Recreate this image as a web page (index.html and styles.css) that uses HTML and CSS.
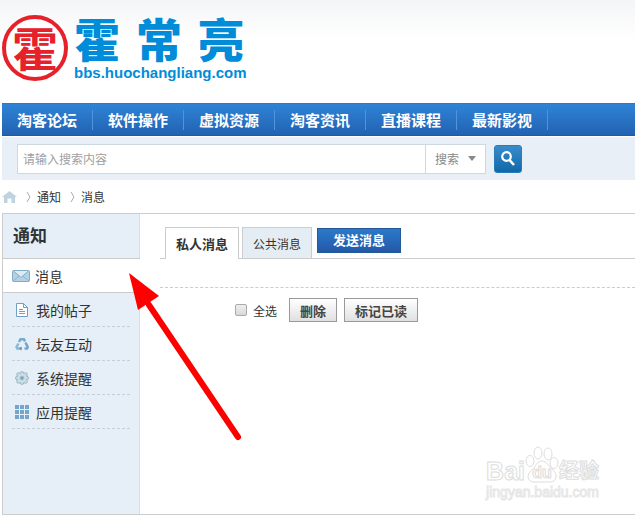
FILE: index.html
```
<!DOCTYPE html>
<html lang="zh-CN">
<head>
  <meta charset="UTF-8" />
  <meta name="viewport" content="width=device-width, initial-scale=1.0"/>
  <title>消息</title>
  <link rel="stylesheet" href="styles.css">
</head>
<body>

<div class="page">
  <!-- Logo -->
  <header class="header">
    <a href="#" class="brand">
      <span class="seal">霍</span>
      <span class="brand-text">
        <span class="brand-name"><span>霍</span><span>常</span><span>亮</span></span>
        <span class="brand-url">bbs.huochangliang.com</span>
      </span>
    </a>
  </header>

  <!-- Navigation links -->
  <nav class="navbar">
    <a href="#">淘客论坛</a>
    <a href="#">软件操作</a>
    <a href="#">虚拟资源</a>
    <a href="#">淘客资讯</a>
    <a href="#">直播课程</a>
    <a href="#">最新影视</a>
  </nav>

  <form class="search">
    <input type="text" class="search-input" placeholder="请输入搜索内容" aria-label="请输入搜索内容">
    <div class="search-type">
      <select aria-label="搜索">
        <option>搜索</option>
      </select>
      <svg width="8" height="5" viewBox="0 0 8 5"><path d="M0 0H8L4 5Z" fill="#888"/></svg>
    </div>
    <button type="button" class="search-btn" aria-label="搜索">
      <svg width="14" height="15" viewBox="0 0 14 15" fill="none" stroke="#fff">
        <circle cx="5.5" cy="5.5" r="4.3" stroke-width="2.2"/>
        <path d="M8.5 9L13 14" stroke-width="2.6"/>
      </svg>
    </button>
  </form>

  <div class="crumbs">
    <a href="#" aria-label="首页">
      <svg class="home" width="15" height="12" viewBox="0 0 15 12"><path d="M7.5 0L15 6H13V12H9.5V7.5H5.5V12H2V6H0Z" fill="#bfd2e0"/></svg>
    </a>
    <svg class="sep" width="5" height="10" viewBox="0 0 5 10"><path d="M1 0L4 5L1 10" fill="none" stroke="#aaa"/></svg>
    <a href="#">通知</a>
    <svg class="sep" width="5" height="10" viewBox="0 0 5 10"><path d="M1 0L4 5L1 10" fill="none" stroke="#aaa"/></svg>
    <a href="#">消息</a>
  </div>

  <div class="main">
    <!-- Side menu -->
    <aside class="sidebar">
      <h2>通知</h2>
      <a href="#" class="current">
        <svg width="18" height="12" viewBox="0 0 18 12">
          <rect x=".5" y=".5" width="17" height="11" rx="1" fill="#b4d1e4" stroke="#83acc7"/>
          <path d="M1 11L7 6M17 11L11 6" stroke="#8cb4ce" fill="none"/>
          <path d="M1.5 1L9 7.5L16.5 1" fill="#dbeaf4" stroke="#83acc7"/>
        </svg>
        消息
      </a>
      <ul class="side-list">
        <li><a href="#">
          <svg width="14" height="14" viewBox="0 0 14 14" fill="none" stroke="#6fa0c6">
            <path d="M1.5 .5H8.5L12.5 4.5V13.5H1.5Z" fill="#fff"/>
            <path d="M8.5 .5V4.5H12.5M4 6.5H8M4 8.5H10M4 10.5H10"/>
          </svg>
          我的帖子</a></li>
        <li><a href="#">
          <svg width="14" height="14" viewBox="0 0 14 14" fill="none" stroke-width="2.5">
            <path d="M4 5L5.5 2.2H9L10 4.5" stroke="#79a9cb"/>
            <path d="M10.5 5.5L12.7 10L12 11.5H9.5" stroke="#76a5cc"/>
            <path d="M7 11.5H2.2L1.5 10L3.5 6.5" stroke="#8ab9d2"/>
            <path d="M6.500 9.500L4 11.5L6.500 13.500Z" fill="#5f97bb"/>
          </svg>
          坛友互动</a></li>
        <li><a href="#">
          <svg width="14" height="14" viewBox="0 0 14 14">
            <g fill="#c4dbe6" stroke="#96adb6" stroke-width=".8">
              <circle cx="7" cy="2.3" r="1.8"/><circle cx="10.5" cy="3.5" r="1.8"/>
              <circle cx="11.7" cy="7" r="1.8"/><circle cx="10.5" cy="10.5" r="1.8"/>
              <circle cx="7" cy="11.7" r="1.8"/><circle cx="3.5" cy="10.5" r="1.8"/>
              <circle cx="2.3" cy="7" r="1.8"/><circle cx="3.5" cy="3.5" r="1.8"/>
            </g>
            <circle cx="7" cy="7" r="4.5" fill="#c8dfec"/>
            <circle cx="7" cy="7" r="2" fill="#8a9da6" stroke="#a8c2d0"/>
          </svg>
          系统提醒</a></li>
        <li><a href="#">
          <svg width="14" height="14" viewBox="0 0 14 14" fill="#76a5cc">
            <rect x="0" y="0" width="4" height="4"/><rect x="5" y="0" width="4" height="4"/><rect x="10" y="0" width="4" height="4"/>
            <rect x="0" y="5" width="4" height="4"/><rect x="5" y="5" width="4" height="4"/><rect x="10" y="5" width="4" height="4"/>
            <rect x="0" y="10" width="4" height="4"/><rect x="5" y="10" width="4" height="4"/><rect x="10" y="10" width="4" height="4"/>
          </svg>
          应用提醒</a></li>
      </ul>
    </aside>

    <!-- Messages -->
    <section class="content">
      <div class="tabs">
        <a href="#" class="tab active">私人消息</a>
        <a href="#" class="tab">公共消息</a>
        <a href="#" class="send">发送消息</a>
      </div>
      <div class="tools">
        <input type="checkbox" id="check-all">
        <label for="check-all">全选</label>
        <button type="button">删除</button>
        <button type="button">标记已读</button>
      </div>
    </section>
  </div>

  <!-- Pointer over the side menu -->
  <svg class="arrow" width="114" height="168" viewBox="0 0 114 168">
    <path d="M20 32L109 164" stroke="#f00" stroke-width="6" stroke-linecap="round"/>
    <path d="M0 0L30 23L9 37Z" fill="#f00"/>
  </svg>

  <!-- Watermark -->
  <div class="watermark">
    <div class="wm-top">
      <span>Bai</span>
      <span class="paw">
        <svg width="34" height="38" viewBox="0 0 34 38" fill="#fff" stroke="#ddd">
          <ellipse cx="5" cy="15" rx="4" ry="5.5"/>
          <ellipse cx="13" cy="7" rx="4" ry="6"/>
          <ellipse cx="23" cy="8" rx="4" ry="6"/>
          <ellipse cx="29" cy="17" rx="4" ry="5.5"/>
          <path d="M17 15C12 15 11 20 7 24C1 28 2 36 9 36H25C32 36 33 28 28 24C23 20 22 15 17 15Z"/>
        </svg>
        <b>du</b>
      </span>
      <span class="wm-cn">经验</span>
    </div>
    <div class="wm-url">jingyan.baidu.com</div>
  </div>
</div>

</body>
</html>
```
FILE: styles.css
```
* {
  margin: 0;
  padding: 0;
  box-sizing: border-box;
}

body {
  font-family: "Liberation Sans", "Noto Sans CJK SC", sans-serif;
  font-size: 12px;
  color: #333;
  background: #fff linear-gradient(#f4f5f7, #fff) no-repeat;
  background-size: 100% 40px;
}

a {
  color: #333;
  text-decoration: none;
}

svg {
  display: block;
  flex: none;
}

.page {
  position: relative;
  padding-left: 2px;
}

.header {
  height: 103px;
  padding-top: 15px;
}

.brand {
  display: flex;
  gap: 6px;
}

.seal {
  width: 66px;
  height: 66px;
  border: 4px solid #e6212a;
  border-radius: 50%;
  background: #fff;
  color: #e6212a;
  font-size: 46px;
  font-weight: bold;
  line-height: 62px;
  text-align: center;
}

.brand-text {
  color: #008cd9;
  font-weight: bold;
}

.brand-name {
  display: flex;
  gap: 16px;
  font-size: 46px;
  font-weight: 900;
  line-height: 52px;
}

.brand-url {
  display: block;
  font-size: 15px;
  line-height: 12px;
}

.navbar {
  display: flex;
  align-items: center;
  height: 33px;
  border-top: 1px solid #2b78c4;
  border-bottom: 1px solid #1f5a9e;
  background: linear-gradient(#2f83d6, #2262b3);
}

.navbar a {
  height: 20px;
  padding: 0 15px;
  border-right: 1px solid #4f94dc;
  color: #fff;
  font-size: 15px;
  font-weight: bold;
  line-height: 22px;
}

.search {
  display: flex;
  align-items: center;
  height: 43px;
  margin-top: 1px;
  padding-left: 15px;
  background: #e8eff6;
}

.search-input {
  flex: 0 1 409px;
  min-width: 0;
  height: 30px;
  padding: 2px 5px 0;
  border: 1px solid #ced9df;
  background: #fff;
  font: inherit;
}

.search-input::placeholder {
  color: #a0a0a0;
}

.search-type {
  display: flex;
  align-items: center;
  width: 60px;
  height: 30px;
  padding-left: 9px;
  border: 1px solid #ced9df;
  border-left: none;
  background: #fff;
}

.search-type select {
  width: 33px;
  padding-top: 2px;
  border: none;
  background: none;
  appearance: none;
  color: #888;
  font: inherit;
}

.search-btn {
  display: flex;
  align-items: center;
  justify-content: center;
  width: 28px;
  height: 28px;
  margin-left: 8px;
  border: 1px solid #2a7cb8;
  border-radius: 3px;
  background: linear-gradient(#3a8cc9, #0f69a9);
}

.crumbs {
  display: flex;
  align-items: center;
  height: 33px;
}

.crumbs .sep {
  margin: 0 6px 0 9px;
}

.main {
  display: flex;
  border: 1px solid #ccc;
  border-right: none;
}

.sidebar {
  flex: none;
  width: 137px;
  padding-bottom: 85px;
  border-right: 1px solid #d5dfe7;
  background: #e6eff7;
}

.sidebar h2 {
  height: 44px;
  padding-left: 10px;
  font-size: 17px;
  line-height: 46px;
}

.sidebar a {
  display: flex;
  align-items: center;
  font-size: 14px;
}

.sidebar .current {
  gap: 5px;
  height: 35px;
  margin-right: -1px;
  padding-left: 9px;
  border: solid #ccc;
  border-width: 1px 0;
  background: #fff;
}

.side-list {
  padding: 0 9px;
  list-style: none;
}

.side-list a {
  gap: 7px;
  height: 34px;
  padding-left: 3px;
  border-bottom: 1px dashed #c6cfd6;
}

.content {
  flex: 1;
  min-width: 0;
  padding: 13px 0 0 20px;
}

.tabs {
  display: flex;
  align-items: flex-end;
  height: 32px;
  padding-left: 5px;
  border-bottom: 1px solid #ccc;
}

.tab {
  height: 31px;
  margin-right: 3px;
  padding: 0 10px;
  border: 1px solid #ccc;
  border-bottom: none;
  background: #e5edf4;
  line-height: 34px;
}

.tab.active {
  height: 32px;
  margin-bottom: -1px;
  background: #fff;
  font-size: 13px;
  font-weight: bold;
}

.send {
  align-self: flex-start;
  height: 25px;
  margin: 1px 0 0 2px;
  padding: 0 15px;
  border: 1px solid #235994;
  background: linear-gradient(#2b79cb, #2458a8);
  color: #fff;
  font-size: 13px;
  font-weight: bold;
  line-height: 24px;
}

.tools {
  display: flex;
  align-items: center;
  margin-top: 28px;
  padding: 10px 0 0 75px;
  border-top: 1px dashed #ccc;
}

.tools input {
  width: 12px;
  height: 12px;
  margin-right: 6px;
  border: 1px solid #aaa;
  border-radius: 2px;
  appearance: none;
  background: linear-gradient(#eee, #d9d9d9);
}

.tools label {
  margin-right: 5px;
}

.tools button {
  height: 24px;
  margin-left: 7px;
  padding: 0 10px;
  border: 1px solid #999;
  background: linear-gradient(#fff, #e0e0e0);
  color: #444;
  font: bold 13px "Liberation Sans", "Noto Sans CJK SC", sans-serif;
}

.arrow {
  position: absolute;
  top: 273px;
  left: 129px;
}

.watermark {
  position: absolute;
  right: 36px;
  bottom: 15px;
  color: #fff;
  -webkit-text-stroke: 1px #ddd;
}

.wm-top {
  display: flex;
  align-items: flex-end;
  font-size: 25px;
  font-weight: bold;
  line-height: 26px;
}

.paw {
  position: relative;
}

.paw b {
  position: absolute;
  right: 0;
  bottom: 0;
  left: 0;
  font-size: 16px;
  line-height: 22px;
  text-align: center;
}

.wm-cn {
  font-size: 20px;
}

.wm-url {
  font-size: 14px;
  line-height: 16px;
  -webkit-text-stroke-color: #e6e6e6;
}
```
